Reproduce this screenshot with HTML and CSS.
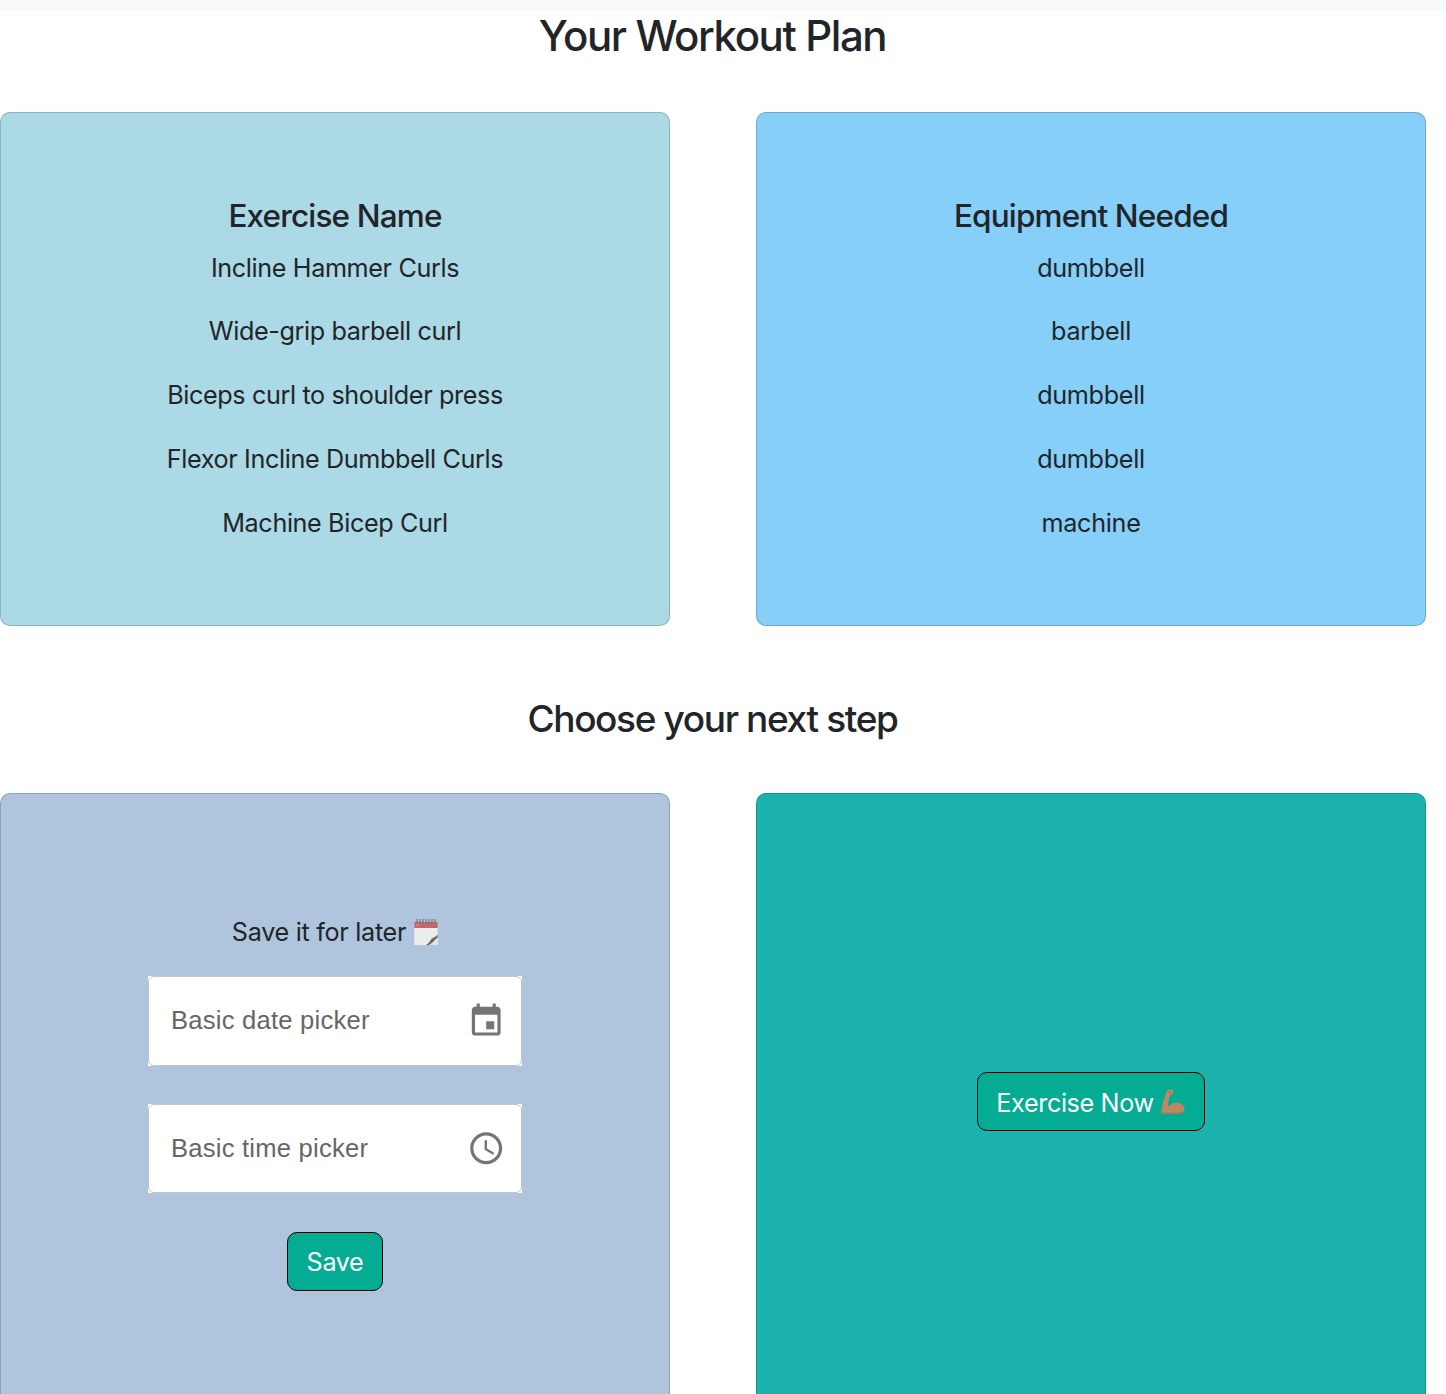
FILE: index.html
```
<!DOCTYPE html>
<html lang="en">
<head>
<meta charset="utf-8">
<title>Your Workout Plan</title>
<link rel="stylesheet" href="styles.css">
</head>
<body>
<div class="navbar-edge"></div>
<main class="page">
  <h1 class="title">Your Workout Plan</h1>
  <section class="row plan">
    <div class="card exercises">
      <h2>Exercise Name</h2>
      <p>Incline Hammer Curls</p>
      <p>Wide-grip barbell curl</p>
      <p>Biceps curl to shoulder press</p>
      <p>Flexor Incline Dumbbell Curls</p>
      <p>Machine Bicep Curl</p>
    </div>
    <div class="card equipment">
      <h2>Equipment Needed</h2>
      <p>dumbbell</p>
      <p>barbell</p>
      <p>dumbbell</p>
      <p>dumbbell</p>
      <p>machine</p>
    </div>
  </section>
  <h2 class="subtitle">Choose your next step</h2>
  <section class="row next">
    <div class="card later">
      <p class="save-label">Save it for later
        <svg class="emoji" viewBox="0 0 24 28" aria-hidden="true">
          <path fill="#eeeeee" d="M.3 4h23.400v23H.3z"/>
          <path fill="#c4656a" d="M.3 4h23.400v6H.3z"/>
          <path fill="#d98589" d="M2 6.200h4v1.600H2z"/>
          <path stroke="#e1e2e4" stroke-width=".5" d="M1 14h22M1 18h20M1 22h16M5 10v17M9 10v17M13 10v17M17 10v14M21 10v8"/>
          <path stroke="#67646b" stroke-width="1" d="M3 1v4M6 1v4M9 1v4M12 1v4M15 1v4M18 1v4M21 1v4"/>
          <path fill="#e4e4e5" d="M23.700 18v9H14z"/>
          <path fill="#68686b" d="M23.700 16.500c-2.500 2.800-4.500 3-6.200 4.200-1 1.800-3 4.800-5.500 6.300h3c3-1.500 5.500-5 8.700-7.500z"/>
        </svg>
      </p>
      <div class="field"><span>Basic date picker</span>
        <svg viewBox="0 0 24 24" aria-hidden="true"><path d="M17 12h-5v5h5v-5zM16 1v2H8V1H6v2H5c-1.110 0-1.990.9-1.990 2L3 19c0 1.100.89 2 2 2h14c1.100 0 2-.9 2-2V5c0-1.100-.9-2-2-2h-1V1h-2zm3 18H5V8h14v11z"/></svg>
      </div>
      <div class="field time"><span>Basic time picker</span>
        <svg viewBox="0 0 24 24" aria-hidden="true"><path d="M11.990 2C6.470 2 2 6.480 2 12s4.470 10 9.990 10C17.520 22 22 17.520 22 12S17.520 2 11.990 2zM12 20c-4.420 0-8-3.580-8-8s3.580-8 8-8 8 3.580 8 8-3.580 8-8 8z"/><path d="M12.500 7H11v6l5.250 3.150.75-1.230-4.500-2.670z"/></svg>
      </div>
      <button class="btn save">Save</button>
    </div>
    <div class="card now">
      <button class="btn start"><span>Exercise Now</span>
        <svg class="arm" viewBox="0 0 24 26" aria-hidden="true">
          <path fill="#bd8865" d="M5.500 2.500C6.200.8 9 .3 11 .8c1.300.4 1.500 1.500 1.300 2.600-.2 1.700-1.200 2.700-3 2.600-1.200 3.500-2.300 6.500-2.100 11C9.500 15.500 12.500 13.800 16 13.700c4.300 0 7.700 3 7.700 6.800 0 2.700-3 4.200-8 4.500-3 .2-5-.5-8-.4-2.500.1-5.200.3-7-.3C.3 18.500 2.700 9.500 5.500 2.500z"/>
          <path fill="#a9765a" d="M.7 23.300c3 .6 6-.1 9 .3 5 .5 10 .2 13.500-1.600-1.500 2.300-5 3-9 3.100-2.500 0-4.500-.6-7-.5-2.300.1-4.800.2-6.500-.3z"/>
          <path fill="none" stroke="#99694f" stroke-width=".7" d="M6.500 3.500c1.200-.6 2.700-.6 3.500.1.500.7.100 1.500-.7 1.800"/>
        </svg>
      </button>
    </div>
  </section>
</main>
</body>
</html>
```
FILE: styles.css
```
* { box-sizing: border-box; }
html { overflow: hidden; }
body {
  margin: 0;
  height: 1394px;
  overflow: hidden;
  background: #fff;
  color: #212529;
  font: 400 25.2px/38.4px Inter, "Liberation Sans", sans-serif;
  letter-spacing: -.38px;
}
h1, h2, p { margin: 0; }
.navbar-edge { height: 11px; background: #f8f9fb; }
.page { width: 1425px; text-align: center; white-space: nowrap; }
.title { height: 101px; font-size: 42px; line-height: 50px; font-weight: 500; letter-spacing: -1.4px; }
.row { display: grid; grid-template-columns: 670px 670px; column-gap: 86px; }
.card { border: 1px solid rgba(0, 0, 0, .18); border-radius: 10px; }
.plan .card { height: 514px; padding-top: 83px; }
.card h2 { height: 52.700px; font-size: 31.500px; line-height: 39px; font-weight: 500; letter-spacing: -.84px; }
.plan p { height: 63.800px; }
.exercises { background: #abd9e5; }
.equipment { background: #86cff9; }
.equipment p { letter-spacing: -.3px; }
.subtitle { height: 167px; padding-top: 70px; font-size: 37px; line-height: 46px; font-weight: 500; letter-spacing: -1.360px; }
.next .card { height: 660px; display: flex; flex-direction: column; align-items: center; }
.next .later { background: #afc4dd; padding-top: 119px; }
.next .now { background: #1cb2ad; padding-top: 278px; }
.save-label { display: flex; align-items: center; height: 63px; padding-bottom: 25px; letter-spacing: -.3px; }
.emoji { width: 24px; height: 28px; margin-left: 8px; }
.field {
  position: relative;
  display: flex;
  align-items: center;
  justify-content: space-between;
  width: 374px;
  height: 90px;
  margin-bottom: 38px;
  padding: 0 17px 0 23px;
  color: #666;
  background: #fff;
  font-family: "Liberation Sans", sans-serif;
  font-size: 25.600px;
  letter-spacing: .22px;
}
.field.time { height: 89px; margin-bottom: 39px; }
.field::before { content: ""; position: absolute; inset: 0; border: 1px solid #c4c4c4; border-radius: 6px; }
.field span { padding-bottom: 2px; }
.field.time span { padding-bottom: 0; }
.field svg { width: 38.400px; height: 38.400px; fill: #757575; }
.btn {
  display: flex;
  align-items: center;
  justify-content: center;
  height: 59px;
  padding: 2px 0 0;
  border: 1px solid #000;
  border-radius: 10px;
  background: #04ac93;
  color: #fff;
  font: inherit;
  letter-spacing: -.38px;
}
.save { width: 96px; }
.start { width: 228px; padding-top: 3px; }
.arm { width: 24px; height: 26px; margin: -2px 1px 0 7px; }
```
